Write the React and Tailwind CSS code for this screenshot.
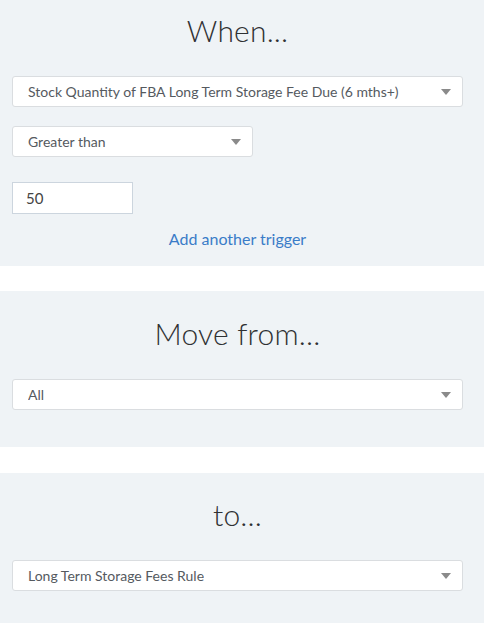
function Caret() {
  return (
    <svg width="10" height="6" viewBox="0 0 10 6" className="shrink-0">
      <polygon points="0,0 10,0 5,6" fill="#8a8a8a" />
    </svg>
  );
}

function Select({ value, className = '' }) {
  return (
    <div
      className={`flex h-[31px] items-center justify-between rounded-[3px] border border-[#dadde0] bg-white pl-[15px] pr-[11px] ${className}`}
    >
      <span className="truncate text-[14px] leading-[20px] text-[#555a5f]">{value}</span>
      <Caret />
    </div>
  );
}

function Heading({ children }) {
  return (
    <h2 className="text-center text-[30px] leading-[36px] font-light text-[#2f3133] tracking-[0.2px]">
      {children}
    </h2>
  );
}

export default function App() {
  return (
    <div
      className="min-h-screen bg-white"
      style={{ fontFamily: 'Lato, "Open Sans", "Liberation Sans", sans-serif' }}
    >
      <section className="bg-[#eff3f6] pl-[12px] pr-[21px] pt-[12px] pb-[17px]">
        <Heading>When...</Heading>
        <Select className="mt-[28px]" value="Stock Quantity of FBA Long Term Storage Fee Due (6 mths+)" />
        <Select className="mt-[19px] w-[241px]" value="Greater than" />
        <div className="mt-[25px] flex h-[32px] w-[121px] items-center border border-[#ccd5de] bg-white pl-[13px] text-[15px] text-[#444]">
          50
        </div>
        <div className="mt-[15px] flex justify-center">
          <a className="block text-[16px] leading-[20px] text-[#3a7cc8]" href="#">
            Add another trigger
          </a>
        </div>
      </section>

      <section className="mt-[25px] bg-[#eff3f6] pl-[12px] pr-[21px] pt-[24px] pb-[37px]">
        <Heading>Move from...</Heading>
        <Select className="mt-[28px]" value="All" />
      </section>

      <section className="mt-[26px] bg-[#eff3f6] pl-[12px] pr-[21px] pt-[23px] pb-[40px]">
        <Heading>to...</Heading>
        <Select className="mt-[28px]" value="Long Term Storage Fees Rule" />
      </section>
    </div>
  );
}
